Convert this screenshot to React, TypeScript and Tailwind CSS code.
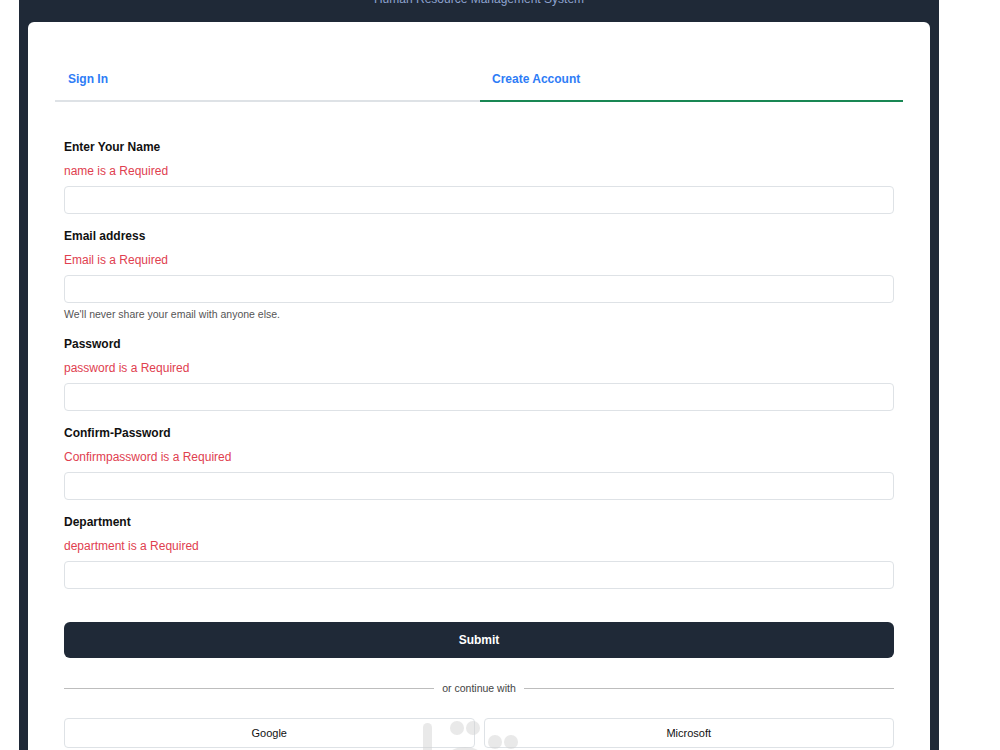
import React from 'react';

const fields = [
  { label: 'Enter Your Name', error: 'name is a Required', type: 'text' },
  { label: 'Email address', error: 'Email is a Required', type: 'email', help: "We'll never share your email with anyone else." },
  { label: 'Password', error: 'password is a Required', type: 'password' },
  { label: 'Confirm-Password', error: 'Confirmpassword is a Required', type: 'password' },
  { label: 'Department', error: 'department is a Required', type: 'text' },
];

const Watermark = () => (
  <svg
    className="pointer-events-none absolute left-[380px] top-[715px] opacity-50"
    width="240"
    height="40"
    viewBox="0 0 240 40"
  >
    <g fill="#d4d4d4">
      <rect x="43" y="8" width="9" height="40" rx="4.5" />
      <circle cx="77" cy="13" r="7" />
      <circle cx="93" cy="13" r="7" />
      <circle cx="115" cy="27" r="7" />
      <circle cx="131" cy="27" r="7" />
      <ellipse cx="85" cy="42" rx="18" ry="10" />
      <ellipse cx="22" cy="42" rx="9" ry="6" />
      <ellipse cx="215" cy="44" rx="16" ry="8" />
    </g>
  </svg>
);

export default function App() {
  return (
    <div className="relative min-h-[750px] w-[1000px] overflow-hidden bg-white font-['Liberation_Sans',Arial,sans-serif]">
      <div className="ml-[19px] w-[920px] bg-[#1f2937] px-[9px] pb-10">
        <h1 className="-mt-[9px] h-[31px] text-center text-[12px] leading-[16px] text-[#8ea3cf]">
          Human Resource Management System
        </h1>
        <div className="rounded-[6px] bg-white px-[27px] pb-10 pt-[34px]">
          <div className="flex">
            <button className="flex-1 border-b-2 border-[#dee2e6] px-[13px] pb-[13px] pt-[15px] text-left text-[12px] font-bold leading-[16px] text-[#2e7cf6]">
              Sign In
            </button>
            <button className="flex-1 border-b-2 border-[#198754] px-[12px] pb-[13px] pt-[15px] text-left text-[12px] font-bold leading-[16px] text-[#2e7cf6]">
              Create Account
            </button>
          </div>

          <form className="pl-[9px] pr-[9px] pt-[37px]">
            {fields.map(f => (
              <div key={f.label} className={f.help ? 'mb-[15px]' : 'mb-[14px]'}>
                <label className="block text-[12px] font-bold leading-4 text-[#111]">{f.label}</label>
                <p className="mt-2 text-[12px] leading-4 text-[#e0404f]">{f.error}</p>
                <input
                  type={f.type}
                  className="mt-[7px] block h-[28px] w-full rounded-[4px] border border-[#dee2e6] bg-white px-2 text-[12px] outline-none"
                />
                {f.help && <p className="mt-[4px] text-[10.5px] leading-[14px] text-[#555]">{f.help}</p>}
              </div>
            ))}

            <button
              type="button"
              className="mt-[19px] h-[36px] w-full rounded-[6px] bg-[#1f2937] text-[12px] font-bold text-white"
            >
              Submit
            </button>

            <div className="mt-[23px] flex items-center gap-2">
              <div className="h-px flex-1 bg-[#bdbdbd]" />
              <span className="text-[10.5px] leading-[14px] text-[#444]">or continue with</span>
              <div className="h-px flex-1 bg-[#bdbdbd]" />
            </div>

            <div className="mt-[23px] flex gap-[9px]">
              <button type="button" className="h-[30px] flex-1 rounded-[4px] border border-[#dee2e6] bg-white text-[11px] text-[#111]">
                Google
              </button>
              <button type="button" className="h-[30px] flex-1 rounded-[4px] border border-[#dee2e6] bg-white text-[11px] text-[#111]">
                Microsoft
              </button>
            </div>
          </form>
        </div>
      </div>
      <Watermark />
    </div>
  );
}
